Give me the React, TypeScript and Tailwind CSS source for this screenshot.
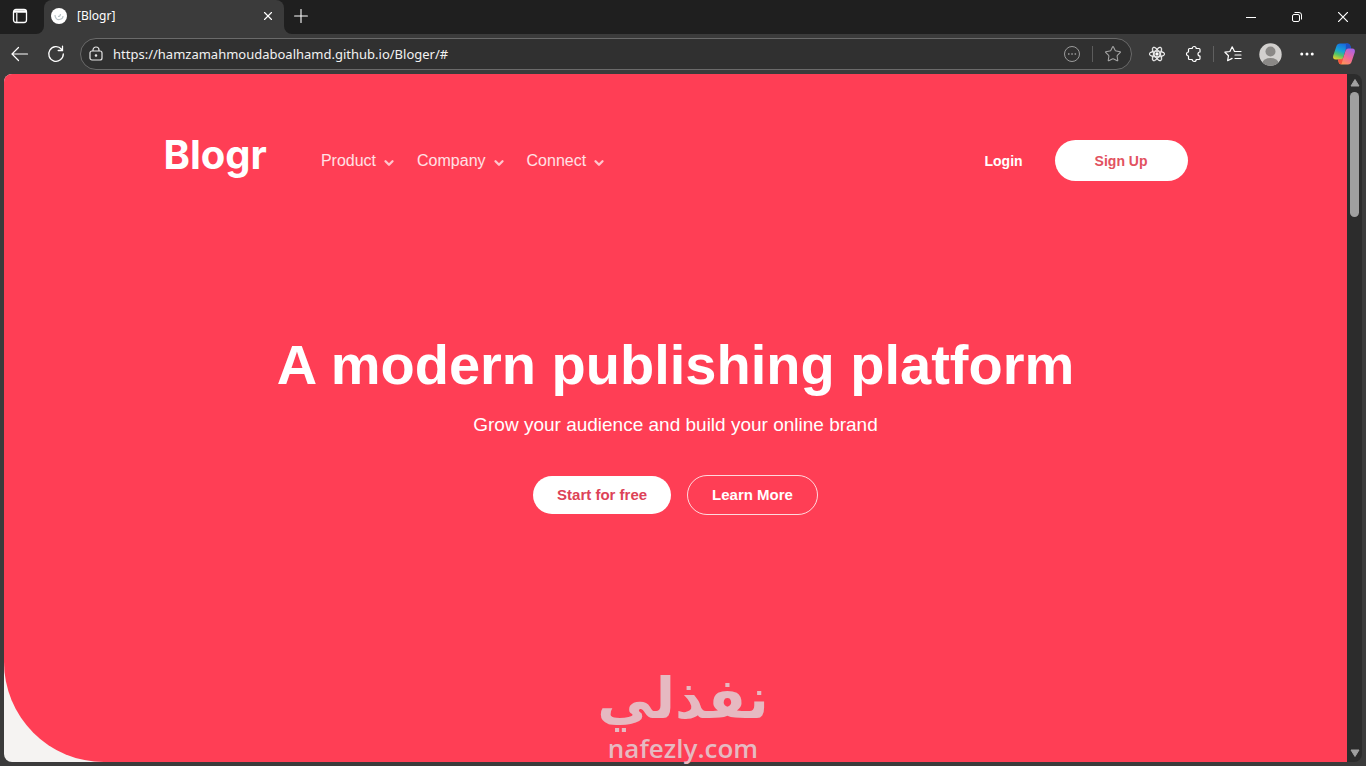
import type { ReactNode } from 'react';
import { ChevronDown, Ellipsis, Plus, Star, X } from 'lucide-react';
import { FaReact } from 'react-icons/fa';

const navItems = ['Product', 'Company', 'Connect'];

function ToolButton({ label, children }: { label: string; children: ReactNode }) {
  return (
    <button aria-label={label} className="flex h-8 w-9 shrink-0 items-center justify-center rounded hover:bg-white/10">
      {children}
    </button>
  );
}

function CopilotLogo() {
  return (
    <svg width="24" height="24" viewBox="0 0 24 24" aria-hidden="true">
      <defs>
        <linearGradient id="cool" x1="0.6" y1="0" x2="0.2" y2="1">
          <stop offset="0" stopColor="#1769e0" />
          <stop offset="0.45" stopColor="#16a3d8" />
          <stop offset="0.7" stopColor="#4fc46a" />
          <stop offset="1" stopColor="#e8d12c" />
        </linearGradient>
        <linearGradient id="warm" x1="0.8" y1="0" x2="0.2" y2="1">
          <stop offset="0" stopColor="#a763e6" />
          <stop offset="0.5" stopColor="#f0679a" />
          <stop offset="1" stopColor="#ff9a4d" />
        </linearGradient>
      </defs>
      <path d="M8 1.500h7.500c1.500 0 2.400 1 2.800 2.300l.8 2.700h-2.600c-1.800 0-2.800 1-3.300 2.700l-1.900 6.200c-.5 1.600-1.400 2.100-2.900 2.100H3.800c-2.200 0-3.200-1.600-2.600-3.800L4.400 4.300C5 2.500 6.200 1.500 8 1.500Z" fill="url(#cool)" />
      <path d="M14 1.500h1.500c1.500 0 2.400 1 2.800 2.300l.8 2.700h-2.600c-1.300 0-2.200.5-2.800 1.500Z" fill="#1f4fc4" />
      <path d="M16 22.500H9.500c-1.500 0-2.400-1-2.800-2.300L5.900 17.500h2.500c1.600 0 2.500-.6 3-2.200l2-6.200c.5-1.700 1.500-2.600 3.100-2.600h3.700c2.200 0 3.200 1.600 2.600 3.800l-3.200 9.400c-.6 1.800-1.800 2.800-3.600 2.800Z" fill="url(#warm)" />
      <path d="M5.900 17.500h2.500c1.600 0 2.500-.6 3-2.200l-1.600 5.900c-.3.900-.9 1.200-1.600.9-.8-.3-1.200-1-1.500-1.900Z" fill="#f5533d" />
    </svg>
  );
}

function TabStrip() {
  return (
    <div className="flex h-[34px] shrink-0 bg-[#1f1f1f]">
      <div className="bg-[#3b3b3b]">
        <button aria-label="Tab actions" className="flex h-full w-11 items-center justify-center rounded-br-lg bg-[#1f1f1f] pr-1 pb-0.5">
          <svg width="16" height="16" viewBox="0 0 16 16" fill="none" stroke="#fff" aria-hidden="true">
            <rect x="1.500" y="1.500" width="13" height="13" rx="2.500" strokeWidth="1.300" />
            <path d="M2 3.500h12" strokeWidth="2.500" />
            <path d="M4.800 5v9" strokeWidth="1.200" />
          </svg>
        </button>
      </div>
      <div className="flex w-60 items-center rounded-t-lg bg-[#3b3b3b] pr-2 pb-0.5 pl-[7px]">
        <svg width="16" height="16" viewBox="0 0 16 16" aria-hidden="true">
          <circle cx="8" cy="8" r="8" fill="#fff" />
          <path d="M4 7c0 3 2 5 4.500 4.500S12 9 12 8M7 8.500c1.500 0 2.500-1 2.500-2.500" fill="none" stroke="#b9c4c8" strokeWidth="1.200" />
        </svg>
        <span className="flex-1 pl-2.5 text-xs text-white">[Blogr]</span>
        <button aria-label="Close tab" className="flex size-4 items-center justify-center">
          <X size={14} strokeWidth={2} color="#fff" />
        </button>
      </div>
      <div className="bg-[#3b3b3b]">
        <button aria-label="New tab" className="flex h-full w-9 items-center justify-center rounded-bl-lg bg-[#1f1f1f] pr-0.5 pb-0.5">
          <Plus size={22} strokeWidth={1.2} color="#fff" />
        </button>
      </div>
      <div className="ml-auto flex">
        <button aria-label="Minimize" className="flex w-[46px] items-center justify-center">
          <svg width="10" height="10" viewBox="0 0 10 10" aria-hidden="true">
            <path d="M0 5.500h10" stroke="#fff" />
          </svg>
        </button>
        <button aria-label="Restore" className="flex w-[46px] items-center justify-center">
          <svg width="10" height="10" viewBox="0 0 10 10" fill="none" stroke="#fff" aria-hidden="true">
            <rect x="0.500" y="2.500" width="7" height="7" rx="1.500" />
            <path d="M2.500.5H7A2.500 2.500 0 0 1 9.500 3v4.500" />
          </svg>
        </button>
        <button aria-label="Close window" className="flex w-[46px] items-center justify-center">
          <svg width="10" height="10" viewBox="0 0 10 10" aria-hidden="true">
            <path d="M0 0l10 10M10 0L0 10" stroke="#fff" strokeWidth="1.200" />
          </svg>
        </button>
      </div>
    </div>
  );
}

function Toolbar() {
  return (
    <div className="flex h-10 shrink-0 items-center gap-px bg-[#3b3b3b] px-1">
      <button aria-label="Back" className="flex size-8 items-center justify-center">
        <svg width="18" height="16" viewBox="0 0 18 16" fill="none" stroke="#fff" strokeWidth="1.200" strokeLinecap="round" aria-hidden="true">
          <path d="M16.500 8H1.500M7.500 1.500 1 8l6.500 6.500" />
        </svg>
      </button>
      <button aria-label="Refresh" className="mx-[3px] flex size-8 items-center justify-center">
        <svg width="18" height="18" viewBox="0 0 18 18" fill="none" stroke="#fff" strokeWidth="1.300" strokeLinecap="round" aria-hidden="true">
          <path d="M14.500 4.200A7.300 7.300 0 1 0 16.300 9M15.500 1.200v4.300h-4.300" />
        </svg>
      </button>
      <div className="mr-1.5 ml-1 flex h-8 flex-1 items-center rounded-full border border-[#6a6a6a] bg-[#303030] px-2">
        <svg width="14" height="16" viewBox="0 0 14 16" fill="none" stroke="#e4e4e4" strokeWidth="1.200" aria-hidden="true">
          <rect x="1" y="5" width="12" height="9" rx="2" />
          <path d="M4 5V4a3 3 0 0 1 6 0v1" />
          <circle cx="7" cy="9.500" r="0.700" fill="#e4e4e4" />
        </svg>
        <input
          type="text"
          aria-label="Address"
          defaultValue="https://hamzamahmoudaboalhamd.github.io/Bloger/#"
          className="ml-2.5 min-w-0 flex-1 bg-transparent pt-0.5 text-[13px] text-[#f2f2f2] outline-none"
        />
        <button aria-label="Page actions" className="flex w-8 items-center justify-center">
          <svg width="18" height="18" viewBox="0 0 18 18" fill="none" stroke="#9b9b9b" aria-hidden="true">
            <circle cx="9" cy="9" r="7.500" />
            <path d="M5 9h1.500M8.300 9h1.500M11.600 9h1.500" strokeWidth="1.500" />
          </svg>
        </button>
        <span className="mx-1 h-4 w-px bg-[#5c5c5c]" />
        <button aria-label="Add to favorites" className="-mr-1.5 flex w-8 items-center justify-center">
          <Star size={18} strokeWidth={1.4} color="#a5a5a5" />
        </button>
      </div>
      <ToolButton label="React developer tools">
        <FaReact size={16} color="#fff" stroke="#fff" strokeWidth={16} />
      </ToolButton>
      <ToolButton label="Extensions">
        <svg width="18" height="18" viewBox="0 0 18 18" fill="none" stroke="#fff" strokeWidth="1.200" strokeLinejoin="round" aria-hidden="true">
          <path d="M4.500 3.500h2.700a2 2 0 0 1 4 0H14a1 1 0 0 1 1 1V7a2 2 0 0 0 0 4v2.500a1 1 0 0 1-1 1h-2.800a2 2 0 0 1-4 0H4.500a1 1 0 0 1-1-1V11a2 2 0 0 1 0-4V4.500a1 1 0 0 1 1-1Z" />
        </svg>
      </ToolButton>
      <span className="h-4 w-px bg-[#606060]" />
      <ToolButton label="Favorites">
        <svg width="18" height="18" viewBox="0 0 18 18" fill="none" stroke="#fff" strokeWidth="1.200" strokeLinejoin="round" strokeLinecap="round" aria-hidden="true">
          <path d="M17 6.500h-6.500L8.200 1.800 5.900 6.500l-5 .7 3.600 3.500-.9 5 4.500-2.300M11 10h6M11 13.500h6" />
        </svg>
      </ToolButton>
      <ToolButton label="Profile">
        <svg width="23" height="23" viewBox="0 0 23 23" aria-hidden="true">
          <clipPath id="avatar">
            <circle cx="11.500" cy="11.500" r="11.200" />
          </clipPath>
          <g clipPath="url(#avatar)">
            <rect width="23" height="23" fill="#d2d0ce" />
            <circle cx="11.500" cy="8.500" r="5" fill="#8a8886" />
            <ellipse cx="11.500" cy="20" rx="8" ry="5" fill="#8a8886" />
          </g>
        </svg>
      </ToolButton>
      <ToolButton label="Settings and more">
        <Ellipsis size={18} color="#fff" />
      </ToolButton>
      <ToolButton label="Copilot">
        <CopilotLogo />
      </ToolButton>
    </div>
  );
}

function Hero() {
  return (
    <div className="flex-1 rounded-bl-[100px] bg-[#ff3e55] px-8 font-['Liberation_Sans',Arial,sans-serif] text-white">
      <header className="mx-auto flex max-w-5xl items-center pt-[66px]">
        <a href="#" className="-mt-3 font-['Inter',sans-serif] text-[40px] leading-none font-bold">
          Blogr
        </a>
        <nav className="ml-[54px] flex gap-[21px]">
          {navItems.map((item) => (
            <button key={item} className="flex items-center gap-1.5 text-base text-white/85">
              {item}
              <ChevronDown size={14} strokeWidth={4} className="mt-1 text-white/70" />
            </button>
          ))}
        </nav>
        <div className="ml-auto flex items-center gap-8">
          <a href="#" className="text-sm font-bold">
            Login
          </a>
          <button className="h-[41px] rounded-full bg-white px-10 text-sm font-bold text-[#e2525f]">Sign Up</button>
        </div>
      </header>

      <section className="pt-[152px] text-center">
        <h1 className="text-[56px] leading-[64px] font-bold">A modern publishing platform</h1>
        <p className="mt-3.5 text-[19px] leading-7">Grow your audience and build your online brand</p>
        <div className="mt-9 flex items-center justify-center gap-4">
          <button className="h-[38px] rounded-full bg-white px-6 text-[15px] font-bold text-[#dd4257]">
            Start for free
          </button>
          <button className="h-10 rounded-full border border-white/80 px-6 text-[15px] font-bold">Learn More</button>
        </div>
      </section>
    </div>
  );
}

function Scrollbar() {
  return (
    <div className="flex w-[15px] flex-col items-center rounded-r-lg bg-[#2c2c2c] py-1 text-[#a0a0a0]">
      <svg width="10" height="10" viewBox="0 0 10 10" fill="currentColor" aria-hidden="true">
        <path d="M5 1.500 9 8H1Z" stroke="currentColor" strokeLinejoin="round" />
      </svg>
      <div className="mt-1 h-[125px] w-[9px] rounded-full bg-[#a0a0a0]" />
      <svg width="10" height="10" viewBox="0 0 10 10" fill="currentColor" className="mt-auto" aria-hidden="true">
        <path d="M5 8.500 9 2H1Z" stroke="currentColor" strokeLinejoin="round" />
      </svg>
    </div>
  );
}

export default function App() {
  return (
    <div className="relative flex h-screen flex-col overflow-hidden bg-[#3b3b3b] font-['Noto_Sans',sans-serif]">
      <TabStrip />
      <Toolbar />
      <main className="mx-1 mb-1 flex flex-1">
        <div className="flex flex-1 overflow-hidden rounded-l-lg bg-[#f5f3f2]">
          <Hero />
        </div>
        <Scrollbar />
      </main>

      <div className="pointer-events-none absolute inset-x-0 bottom-0 flex flex-col items-center text-[#e6b9c1]">
        <span lang="ar" dir="rtl" className="font-['DejaVu_Sans',sans-serif] text-[56px] leading-[62px] font-bold">
          نفذلي
        </span>
        <span className="font-['Open_Sans',sans-serif] text-[26px] leading-9 font-semibold">nafezly.com</span>
      </div>
    </div>
  );
}
